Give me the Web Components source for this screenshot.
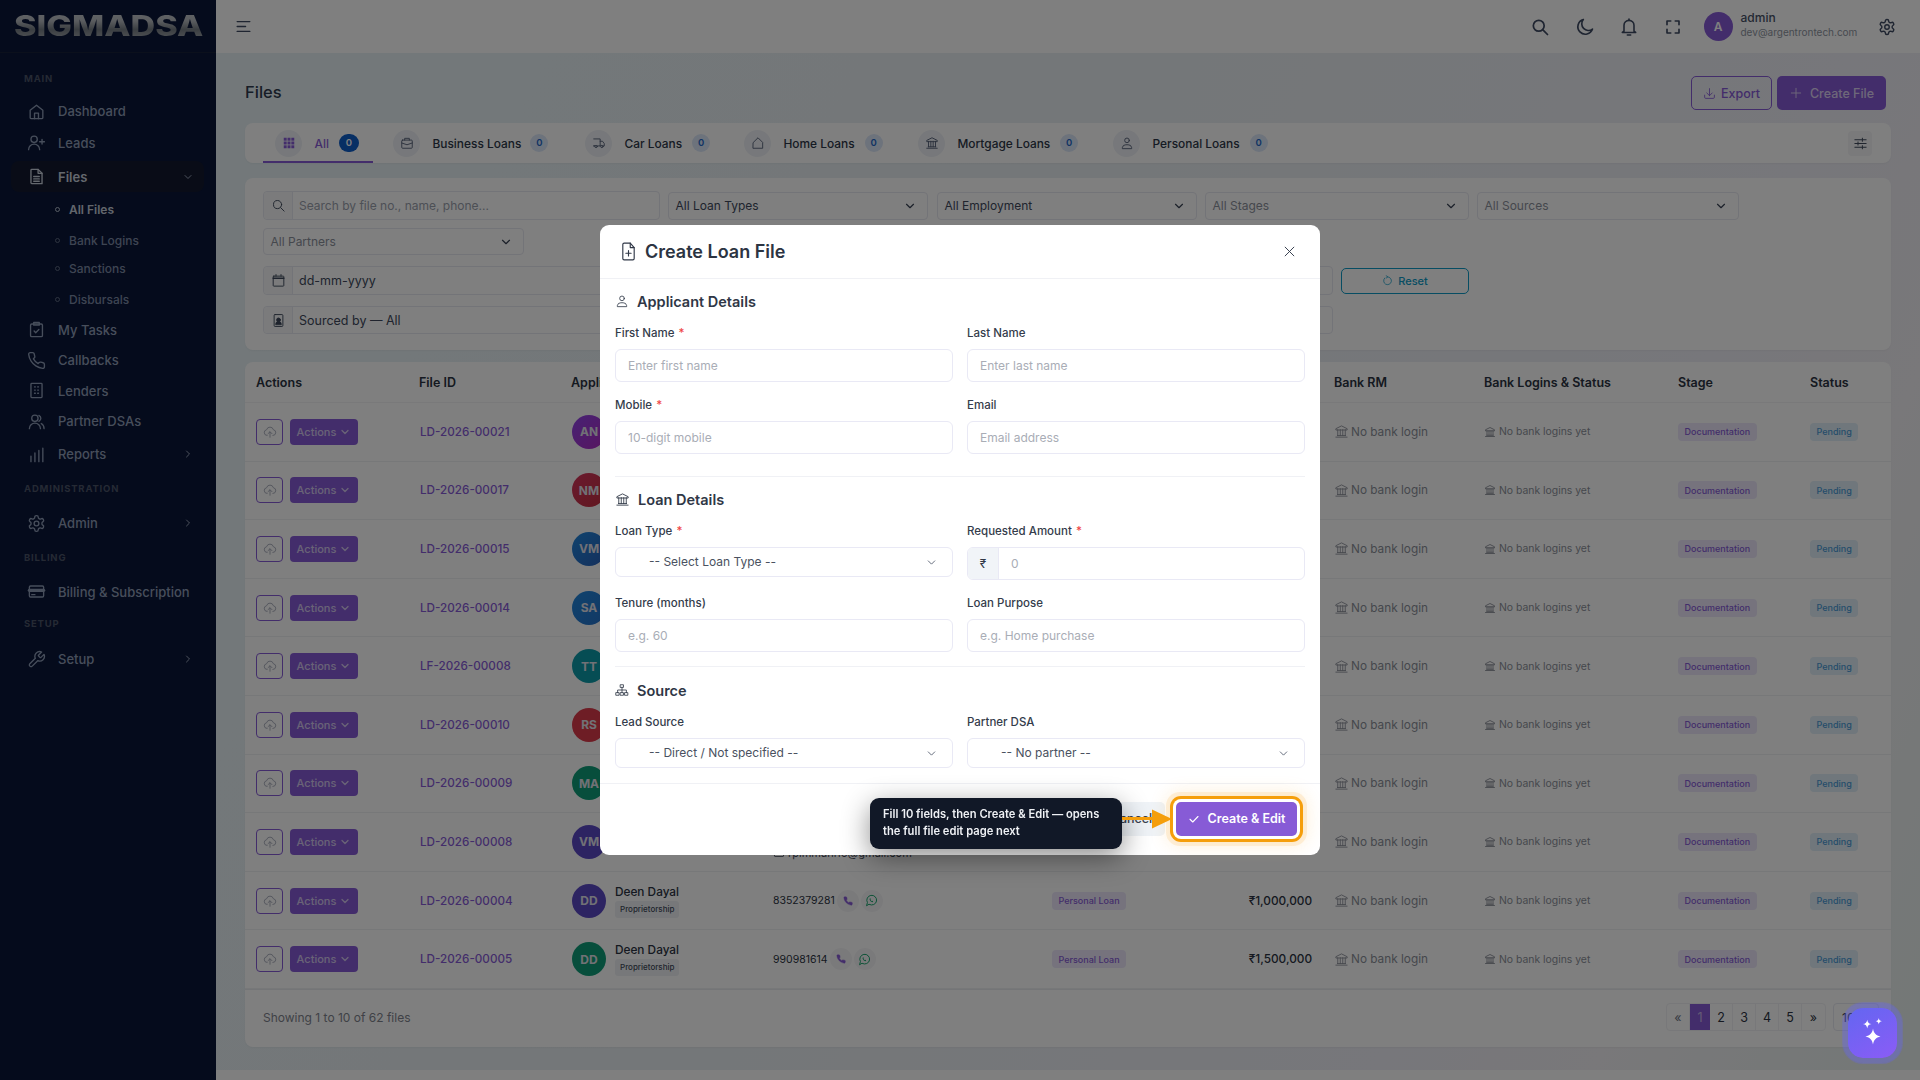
<!DOCTYPE html>
<html lang="en">
<head>
<meta charset="utf-8">
<title>Files</title>
<style>
html,body{margin:0;padding:0;width:1920px;height:1080px;overflow:hidden;background:#fff;font-family:Inter,"Liberation Sans",sans-serif}
</style>
</head>
<body>
<app-shell></app-shell>
<script>
const P={
home:'<path d="M4 10.5 12 4l8 6.5V20a1 1 0 0 1-1 1H5a1 1 0 0 1-1-1z"/><path d="M9.5 21v-7h5v7"/>',
userplus:'<circle cx="9" cy="8" r="4"/><path d="M2 21a7 7 0 0 1 14 0"/><path d="M19 8v6M16 11h6"/>',
file:'<path d="M6 3h8l5 5v13H6a1 1 0 0 1-1-1V4a1 1 0 0 1 1-1z"/><path d="M14 3v5h5"/><path d="M8.500 12h7M8.500 15h7M8.500 18h7"/>',
tasks:'<rect x="4.500" y="5" width="15" height="16" rx="1.500"/><path d="M8.500 3h7v3.500h-7z"/><path d="m9 14 2 2 4-4"/>',
phone:'<path d="M22 16.920v3a2 2 0 0 1-2.180 2 19.790 19.790 0 0 1-8.630-3.070 19.500 19.500 0 0 1-6-6 19.790 19.790 0 0 1-3.070-8.670A2 2 0 0 1 4.110 2h3a2 2 0 0 1 2 1.720c.13.960.36 1.900.7 2.810a2 2 0 0 1-.45 2.110L8.090 9.910a16 16 0 0 0 6 6l1.270-1.270a2 2 0 0 1 2.110-.45c.91.340 1.850.57 2.810.7A2 2 0 0 1 22 16.920z"/>',
building:'<rect x="5" y="3" width="14" height="18" rx="1"/><path d="M9.500 7.500h1M13.500 7.500h1M9.500 11.500h1M13.500 11.500h1M9.500 15.500h1M13.500 15.500h1"/>',
users:'<circle cx="10" cy="8" r="4"/><path d="M3 21a7 7 0 0 1 14 0"/><path d="M15 4.300a4 4 0 0 1 0 7.400M18 14.500a7 7 0 0 1 3.500 6.500"/>',
bars:'<path d="M5 21v-7M10 21V10M15 21V7M20 21V4"/>',
gear:'<path d="M12.220 2h-.44a2 2 0 0 0-2 2v.18a2 2 0 0 1-1 1.730l-.43.25a2 2 0 0 1-2 0l-.15-.08a2 2 0 0 0-2.730.73l-.22.38a2 2 0 0 0 .73 2.730l.15.1a2 2 0 0 1 1 1.720v.51a2 2 0 0 1-1 1.740l-.15.09a2 2 0 0 0-.73 2.730l.22.38a2 2 0 0 0 2.730.73l.15-.08a2 2 0 0 1 2 0l.43.25a2 2 0 0 1 1 1.730V20a2 2 0 0 0 2 2h.44a2 2 0 0 0 2-2v-.18a2 2 0 0 1 1-1.730l.43-.25a2 2 0 0 1 2 0l.15.08a2 2 0 0 0 2.730-.73l.22-.39a2 2 0 0 0-.73-2.730l-.15-.08a2 2 0 0 1-1-1.740v-.5a2 2 0 0 1 1-1.740l.15-.09a2 2 0 0 0 .73-2.730l-.22-.38a2 2 0 0 0-2.730-.73l-.15.08a2 2 0 0 1-2 0l-.43-.25a2 2 0 0 1-1-1.730V4a2 2 0 0 0-2-2z"/><circle cx="12" cy="12" r="3"/>',
card:'<rect x="3" y="5" width="18" height="14" rx="1.500"/><path d="M3 10.500h18" stroke-width="4"/><path d="M6 16h4"/>',
wrench:'<path d="M14.700 6.300a1 1 0 0 0 0 1.400l1.600 1.600a1 1 0 0 0 1.400 0l3.770-3.770a6 6 0 0 1-7.940 7.940l-6.910 6.910a2.120 2.120 0 0 1-3-3l6.910-6.910a6 6 0 0 1 7.940-7.940l-3.760 3.760z"/>',
chevd:'<path d="m6 9 6 6 6-6"/>',
chevr:'<path d="m9 6 6 6-6 6"/>',
menu:'<path d="M3 5h18M3 12h12M3 19h18"/>',
search:'<circle cx="10.500" cy="10.500" r="6.500"/><path d="m15.500 15.500 5.500 5.500"/>',
moon:'<path d="M10 3a9 9 0 1 0 11 11.500A8 8 0 0 1 10 3z"/>',
bell:'<path d="M6 17V10a6 6 0 0 1 12 0v7l2 1.500H4z"/><path d="M10 21.500h4M12 4V2.500"/>',
expand:'<path d="M4 9V4h5M15 4h5v5M20 15v5h-5M9 20H4v-5"/>',
download:'<path d="M3 15v4a2 2 0 0 0 2 2h14a2 2 0 0 0 2-2v-4"/><path d="m7 11 5 5 5-5M12 16V3"/>',
plus:'<path d="M12 4v16M4 12h16"/>',
sliders:'<path d="M3 6h18M3 12h18M3 18h18"/><path d="M15 3.500v5M8 9.500v5M15 15.500v5"/>',
grid:'<g fill="currentColor" stroke="none"><rect x="3" y="3" width="5" height="5"/><rect x="9.500" y="3" width="5" height="5"/><rect x="16" y="3" width="5" height="5"/><rect x="3" y="9.500" width="5" height="5"/><rect x="9.500" y="9.500" width="5" height="5"/><rect x="16" y="9.500" width="5" height="5"/><rect x="3" y="16" width="5" height="5"/><rect x="9.500" y="16" width="5" height="5"/><rect x="16" y="16" width="5" height="5"/></g>',
brief:'<rect x="3" y="7" width="18" height="14" rx="1.500"/><path d="M8 7V4h8v3M3 12l9 3 9-3"/>',
truck:'<path d="M3 5h11v12H9M5 17H3z"/><path d="M14 9h4l3 4v4h-2M15 17h-1"/><circle cx="7" cy="18" r="2"/><circle cx="17" cy="18" r="2"/>',
house:'<path d="M4 11 12 3l8 8v10H4z"/>',
bank:'<path d="M3 21h18M3 9V7.500L12 3l9 4.500V9zM5.500 18.500h13M6 9v9.500M10 9v9.500M14 9v9.500M18 9v9.500"/>',
user:'<circle cx="12" cy="7.500" r="4"/><path d="M4 21v-1a6 6 0 0 1 6-5h4a6 6 0 0 1 6 5v1z"/>',
cloud:'<path d="M7 18a5 5 0 0 1-.8-9.900 6 6 0 0 1 11.600 0A5 5 0 0 1 17 18"/><path d="M12 21v-9M8.500 15l3.500-3.500 3.500 3.500"/>',
calendar:'<rect x="3.500" y="5" width="17" height="16" rx="1"/><path d="M3.500 8.500h17" stroke-width="2.500"/><path d="M8 2.500V5M16 2.500V5"/>',
contact:'<rect x="5" y="2.500" width="14" height="19" rx="1.500"/><circle cx="12" cy="11" r="3" fill="currentColor"/><path d="M7.500 18a4.500 4.500 0 0 1 9 0z" fill="currentColor"/>',
reset:'<path d="M6 6.500A8.500 8.500 0 1 0 12 4"/><path d="M9 1.500 12.500 4 9 7"/>',
fileplus:'<path d="M7 2.500h7l4.500 5V20a1.500 1.500 0 0 1-1.500 1.500H7A1.500 1.500 0 0 1 5.500 20V4A1.500 1.500 0 0 1 7 2.500z"/><path d="M14 2.500v5h4.500M12 11v6M9 14h6"/>',
tree:'<rect x="9.500" y="3" width="5" height="4.500"/><rect x="2" y="16.500" width="5" height="4.500"/><rect x="9.500" y="16.500" width="5" height="4.500"/><rect x="17" y="16.500" width="5" height="4.500"/><path d="M12 7.500v9M4.500 16.500V12h15v4.500"/>',
close:'<path d="M5 5l14 14M19 5 5 19"/>',
check:'<path d="m4 12.500 5.500 5.500L20 7"/>',
mail:'<rect x="3" y="5" width="18" height="14" rx="1"/><path d="m3 7 9 6 9-6"/>',
wa:'<path d="M3 21l1.500-5.200a9 9 0 1 1 3.500 3.500z"/><path d="M9 8.500c-.8.600-.8 2 .5 3.800s3 2.900 4.200 2.700c1-.2 1.300-1 1.300-1.700l-1.700-.9-.8.900c-1-.4-2-1.400-2.500-2.500l.8-.9-.8-1.900z" fill="currentColor" stroke="none"/>'
};
const ic=(n,s,w=1.8,extra='')=>`<svg ${extra} width="${s}" height="${s}" viewBox="0 0 24 24" fill="none" stroke="currentColor" stroke-width="${w}" stroke-linecap="round" stroke-linejoin="round" style="flex:none;display:block">${P[n]}</svg>`;
const tpl=(html)=>{const t=document.createElement('template');t.innerHTML=html;return t};
function el(name,css,html){
  const t=typeof html==='string'?tpl(`<style>${css}</style>${html}`):null;
  customElements.define(name,class extends HTMLElement{
    constructor(){super();const s=this.attachShadow({mode:'open'});
      if(t)s.appendChild(t.content.cloneNode(true));
      else s.innerHTML=`<style>${css}</style>${html(this)}`;}
  });
}
const A=(e,k,d='')=>e.getAttribute(k)??d;

/* ---------- sidebar ---------- */
el('nav-section',`:host{display:flex;align-items:center;height:var(--h,30px);padding-left:24px;font:700 9.5px Inter,sans-serif;letter-spacing:.8px;color:#4a5469;text-transform:uppercase}`,`<slot></slot>`);
el('nav-item',`
:host{display:flex;align-items:center;height:var(--h,31px);padding:0 12px 0 11px;font:500 13px Inter,sans-serif;color:#8f9db7}
.row{flex:1;height:100%;display:flex;align-items:center;position:relative;padding-left:15.500px;border-radius:8px;box-sizing:border-box}
:host([active]){align-items:flex-end;color:#c9d0dc}
:host([active]) .row{background:#13192f;font-weight:600;height:31px}
.lbl{margin-left:12.500px;white-space:nowrap}
.chev{position:absolute;right:10px;top:50%;margin-top:-6px;color:#98a3b8}
`,e=>`<div class="row">${ic(A(e,'icon'),19,1.7)}<span class="lbl"><slot></slot></span>${e.hasAttribute('chev')?`<span class="chev">${ic(A(e,'chev'),12,2)}</span>`:''}</div>`);
el('nav-sub',`
:host{display:flex;align-items:center;height:var(--h,30px);padding-left:55px;font:500 12px Inter,sans-serif;letter-spacing:0;color:#7d8aa5}
i{display:block;width:3px;height:3px;border:1px solid #5c6880;border-radius:50%;margin-right:9px}
:host([active]){font-weight:600;color:#c4ccd9}
:host([active]) i{border-color:#b0bac9}
`,`<i></i><slot></slot>`);
el('brand-logo',`
:host{display:flex;align-items:center;height:53px;box-sizing:border-box;border-bottom:1px solid #172038;padding-left:14px;overflow:hidden}
span{display:block;font:800 28px Inter,sans-serif;letter-spacing:0;transform:scaleX(1.22);transform-origin:left center;white-space:nowrap;
background:linear-gradient(180deg,#c8ccd0 0%,#b6babf 35%,#767d84 60%,#b2b6bb 100%);-webkit-background-clip:text;background-clip:text;color:transparent}
`,`<span>SIGMADSA</span>`);
el('side-nav',`
:host{display:block;width:216px;flex:none;background:#0a1638;height:1080px;overflow:hidden}
.list{display:block;padding-top:8px}
`,`<brand-logo></brand-logo><div class="list">
<nav-section style="--h:34px">Main</nav-section>
<nav-item icon="home" style="--h:32px">Dashboard</nav-item>
<nav-item icon="userplus" style="--h:31px">Leads</nav-item>
<nav-item icon="file" chev="chevd" active style="--h:34px">Files</nav-item>
<nav-sub active style="--h:35px">All Files</nav-sub>
<nav-sub style="--h:26px">Bank Logins</nav-sub>
<nav-sub style="--h:31px">Sanctions</nav-sub>
<nav-sub style="--h:30px">Disbursals</nav-sub>
<nav-item icon="tasks" style="--h:31px">My Tasks</nav-item>
<nav-item icon="phone" style="--h:30px">Callbacks</nav-item>
<nav-item icon="building" style="--h:31px">Lenders</nav-item>
<nav-item icon="users" style="--h:30px">Partner DSAs</nav-item>
<nav-item icon="bars" chev="chevr" style="--h:36px">Reports</nav-item>
<nav-section style="--h:33px">Administration</nav-section>
<nav-item icon="gear" chev="chevr" style="--h:36px">Admin</nav-item>
<nav-section style="--h:32px">Billing</nav-section>
<nav-item icon="card" style="--h:37px">Billing &amp; Subscription</nav-item>
<nav-section style="--h:27px">Setup</nav-section>
<nav-item icon="wrench" chev="chevr" style="--h:44px">Setup</nav-item>
</div>`);

/* ---------- top bar ---------- */
el('top-bar',`
:host{display:flex;align-items:center;height:53px;background:#fff;padding:0 24px 0 19px;box-sizing:border-box;color:#3e4a63}
.sp{flex:1}
.ic{display:flex;align-items:center;justify-content:center;width:44.300px}
.av{width:29px;height:29px;border-radius:50%;background:#875bd6;color:#fff;font:600 12px Inter,sans-serif;display:flex;align-items:center;justify-content:center;margin-left:8px}
.who{margin:-4px 0 0 8px;width:137.500px;font:11px/1 Inter,sans-serif;color:#8e94a0}
.who b{display:block;font:500 12px/14px Inter,sans-serif;color:#475167}
.who span{display:block;line-height:14px;font-size:10px;white-space:nowrap}
`,`${ic('menu',17,1.8)}<div class="sp"></div>
<div class="ic">${ic('search',20,2.1)}</div><div class="ic">${ic('moon',20,2)}</div><div class="ic">${ic('bell',20,1.9)}</div><div class="ic">${ic('expand',18,2.2)}</div>
<div class="av">A</div><div class="who"><b>admin</b><span>dev@argentrontech.com</span></div>${ic('gear',18,1.9)}`);

/* ---------- generic ---------- */
el('ui-btn',`
:host{display:inline-flex;align-items:center;justify-content:center;box-sizing:border-box;height:var(--h,34px);width:var(--w,auto);border-radius:5px;font:500 12.500px Inter,sans-serif;gap:5px;white-space:nowrap}
:host([kind=primary]){background:#875bd6;color:#dcd0f3;}
:host([kind=outline]){border:1.500px solid #875bd6;color:#875bd6;}
:host([kind=reset]){border:1.500px solid #0e9bc6;color:#0e9bc6;font-size:11px}
`,e=>`${e.hasAttribute('icon')?ic(A(e,'icon'),+A(e,'size',13),1.6):''}<slot></slot>`);
el('page-head',`
:host{display:flex;align-items:center;height:34px;padding-right:5px}
h1{margin:0 0 2px;flex:1;font:500 16.500px Inter,sans-serif;color:#2e3a4e}
.btns{display:flex;gap:5px}
`,`<h1>Files</h1><div class="btns"><ui-btn kind="outline" icon="download" style="--w:81px">Export</ui-btn><ui-btn kind="primary" icon="plus" size="14" style="--w:109px;gap:7px">Create File</ui-btn></div>`);

el('tab-item',`
:host{display:flex;align-items:center;height:40px;box-sizing:border-box;position:relative;font:500 11.900px Inter,sans-serif;color:#2d3748;flex:none;width:var(--w)}
.c{width:27px;height:27px;border-radius:50%;background:#eef1f6;display:flex;align-items:center;justify-content:center;color:#566178;margin-left:var(--ml,0)}
.t{margin-left:12.500px;white-space:nowrap}
.b{margin-left:var(--bm,10px);min-width:18px;height:18px;padding:0 2px;box-sizing:border-box;border-radius:10px;background:#dbe6f8;color:#2267c9;font:600 9.500px/18px Inter,sans-serif;text-align:center}
:host([active]){color:#875bd6}
:host([active]) .c{color:#875bd6}
:host([active]) .b{background:#0e5ec9;color:#fff;width:20px}
:host([active])::after{content:"";position:absolute;left:0;right:0;bottom:0;height:2px;background:#875bd6}
`,e=>`<div class="c">${ic(A(e,'icon'),14,1.6)}</div><span class="t"><slot></slot></span><span class="b">0</span>`);
el('tab-bar',`
:host{display:flex;align-items:center;height:40px;background:#fff;border-radius:8px;margin-top:13px;padding-left:18px;position:relative;box-shadow:0 1px 2px rgba(0,0,0,.04)}
.s{position:absolute;right:19px;top:8px;width:24px;height:25px;border-radius:4px;background:#f4f5f7;color:#404a5d;display:flex;align-items:center;justify-content:center}
`,`<tab-item active icon="grid" style="--w:110px;--ml:12px;--bm:10px">All</tab-item>
<tab-item icon="brief" style="--w:200px;--ml:20px;--bm:9px">Business Loans</tab-item>
<tab-item icon="truck" style="--w:160px;--ml:12px;--bm:10px">Car Loans</tab-item>
<tab-item icon="house" style="--w:175px;--ml:11px;--bm:10px">Home Loans</tab-item>
<tab-item icon="bank" style="--w:195px;--ml:10px;--bm:10px">Mortgage Loans</tab-item>
<tab-item icon="user" style="--w:170px;--ml:10px;--bm:10px">Personal Loans</tab-item>
<div class="s">${ic('sliders',15,1.6)}</div>`);

el('filter-select',`
:host{display:flex;align-items:center;box-sizing:border-box;width:var(--w);height:var(--h,28px);border:1px solid #e6e8f0;border-radius:4px;background:#fff;padding:0 10px 0 6.500px;font:400 12px Inter,sans-serif;color:var(--c,#40495c)}
span{flex:1;white-space:nowrap}
i{color:#384254;display:block}
`,e=>`<span><slot></slot></span><i>${ic('chevd',14,2)}</i>`);
el('filter-group',`
:host{display:flex;align-items:center;box-sizing:border-box;width:var(--w);height:var(--h,29px);border:1px solid #e6e8f0;border-radius:4px;background:#fff;font:400 12.500px Inter,sans-serif;color:var(--c,#40495c)}
.a{width:28px;height:100%;border-right:1px solid #e6e8f0;display:flex;align-items:center;justify-content:center;color:#3d475a;background:#f6f7f9;border-radius:4px 0 0 4px;flex:none}
span{padding-left:6px;white-space:nowrap}
`,e=>`<div class="a">${ic(A(e,'icon'),15,1.5)}</div><span><slot></slot></span>`);
el('filter-panel',`
:host{display:block;background:#fff;border-radius:8px;margin-top:15px;padding:13px 18px 0;height:172px;box-sizing:border-box;box-shadow:0 1px 2px rgba(0,0,0,.04)}
.r{display:flex;gap:8px;align-items:center}
`,`<div class="r"><filter-group icon="search" style="--w:397px;--c:#9aa0ac;--h:29px"><span style="font-size:12px">Search by file no., name, phone...</span></filter-group>
<filter-select style="--w:260px">All Loan Types</filter-select><filter-select style="--w:260px;margin-left:1px">All Employment</filter-select>
<filter-select style="--w:264px;--c:#8b909b">All Stages</filter-select><filter-select style="--w:262px;--c:#8b909b">All Sources</filter-select></div>
<div class="r" style="margin-top:8px"><filter-select style="--w:261px;--h:27px;--c:#8b909b">All Partners</filter-select></div>
<div class="r" style="margin-top:11px"><filter-group icon="calendar" style="--w:1070px">dd-mm-yyyy</filter-group><ui-btn kind="reset" icon="reset" size="11" style="--w:128px;--h:26px">Reset</ui-btn></div>
<div class="r" style="margin-top:11px"><filter-group icon="contact" style="--w:1070px;--h:28px">Sourced by — All</filter-group></div>`);

/* ---------- table ---------- */
const COLS='163px 152px 202px 279px 159px 123px 150px 194px 132px 1fr';
el('row-head',`
:host{display:grid;grid-template-columns:${COLS};height:40px;align-items:center;border-bottom:1px solid #f2f3f5;font:600 12.500px Inter,sans-serif;color:#2b3342}
div{padding-left:11px;white-space:nowrap}
`,`<div>Actions</div><div>File ID</div><div>Applicant</div><div>Contact</div><div>Loan Type</div><div></div><div>Bank RM</div><div>Bank Logins &amp; Status</div><div>Stage</div><div>Status</div>`);
el('status-chip',`
:host{display:inline-flex;align-items:center;height:18px;padding:0 6.500px;border-radius:4px;font:500 9px Inter,sans-serif;white-space:nowrap;background:var(--b,#ece7fa);color:var(--f,#875bd6)}
`,`<slot></slot>`);
el('file-row',`
:host{display:grid;grid-template-columns:${COLS};height:58.600px;box-sizing:border-box;align-items:center;border-bottom:1px solid #eff0f3;font:400 12px Inter,sans-serif;color:#2b3342}
.c{padding-left:11px;display:flex;align-items:center;white-space:nowrap;min-width:0;height:100%;box-sizing:border-box}
.up{width:27px;height:26px;box-sizing:border-box;border:1.200px solid #875bd6;border-radius:4px;display:flex;align-items:center;justify-content:center;color:#9a9fb0;margin-right:7px}
.ac{width:68px;height:26px;border-radius:4px;background:#875bd6;color:#d3c7ee;font:500 11px Inter,sans-serif;display:flex;align-items:center;justify-content:center;gap:3px}
.id{font:500 11.700px Inter,sans-serif;color:#875bd6;margin-left:1px}
.av{width:34px;height:34px;border-radius:50%;color:#e2e3ec;font:700 12px Inter,sans-serif;display:flex;align-items:center;justify-content:center;flex:none;margin-left:1px}
.nm{margin-left:9px;font:500 11.800px/16px Inter,sans-serif;color:#2b3342}
.pr{display:block;margin-top:1px;width:max-content;font:500 8px/17px Inter,sans-serif;padding:0 5px;background:#eff1f5;border-radius:3px;color:#414a5a}
.ph{font-size:10.500px;color:#2b3342}
.r1,.r2{width:22px;height:22px;border-radius:50%;background:#f5f5f7;display:flex;align-items:center;justify-content:center;flex:none}
.r1{color:#875bd6;margin-left:2px}.r2{color:#16a36b;margin-left:2px}
.r1 svg{fill:currentColor}
.amt{justify-content:flex-end;padding:0 11px 0 0;font:500 11.800px Inter,sans-serif;color:#2b3342}
.rm{color:#8b8f99;font-size:11.800px;gap:2px}
.bl{color:#8b8f99;font-size:10.400px;gap:3px}
.ml{display:flex;align-items:center;gap:3px;margin-top:22px;font-size:11px;color:#3b4352}
`,e=>{const nm=A(e,'name');return `
<div class="c"><div class="up">${ic('cloud',14,1.4)}</div><div class="ac">Actions ${ic('chevd',12,2.6)}</div></div>
<div class="c"><span class="id">${A(e,'fid')}</span></div>
<div class="c"><div class="av" style="background:${A(e,'col')}">${A(e,'ini')}</div>${nm?`<div class="nm">${nm}<span class="pr">Proprietorship</span></div>`:''}</div>
<div class="c">${A(e,'tel')?`<span class="ph">${A(e,'tel')}</span><span class="r1">${ic('phone',10,1)}</span><span class="r2">${ic('wa',13,1.8)}</span>`:''}${A(e,'mail')?`<span class="ml">${ic('mail',12,1.6)}${A(e,'mail')}</span>`:''}</div>
<div class="c">${A(e,'type')?`<status-chip>${A(e,'type')}</status-chip>`:''}</div>
<div class="c amt">${A(e,'amt')}</div>
<div class="c rm">${ic('bank',15,1.4)}No bank login</div>
<div class="c bl">${ic('bank',12,1.8)}No bank logins yet</div>
<div class="c"><status-chip>Documentation</status-chip></div>
<div class="c"><status-chip style="--b:#e0eef8;--f:#4a9bd6">Pending</status-chip></div>`});
el('page-nav',`
:host{display:flex;height:28px;border:1px solid #f0f1f4;border-radius:4px;box-sizing:border-box;font:400 12.500px Inter,sans-serif;color:#2b3342}
b{font-weight:400;width:23px;display:flex;align-items:center;justify-content:center;border-right:1px solid #f0f1f4;box-sizing:border-box}
b:last-child{border:0}
b.on{width:20px;background:#875bd6;color:#c9b8ea;border:0}
b.g{color:#6e7585}
`,`<b class="g">«</b><b class="on">1</b><b>2</b><b>3</b><b>4</b><b>5</b><b>»</b>`);
el('file-table',`
:host{display:block;background:#fff;border-radius:8px;margin-top:12px;height:685px;box-sizing:border-box;box-shadow:0 1px 2px rgba(0,0,0,.04);overflow:hidden}
.f{display:flex;align-items:center;height:57px;padding:0 0 1px 18px;border-top:1px solid #e9eaee;box-sizing:border-box;font:400 12px Inter,sans-serif;color:#7e838d}
.f span{flex:1}
.sel{width:46px;height:28px;margin:0 12px 0 7px;border:1px solid #e6e8f0;border-radius:4px;box-sizing:border-box;padding:6px 8px;font-size:12px;color:#2b3342}
`,()=>{const D=[['LD-2026-00021','AN','linear-gradient(135deg,#8e44e8,#b02cc0)'],['LD-2026-00017','NM','linear-gradient(135deg,#d5345c,#c23040)'],['LD-2026-00015','VM','linear-gradient(135deg,#1f86dc,#2a5fb8)'],['LD-2026-00014','SA','linear-gradient(135deg,#1f86dc,#2570c8)'],['LF-2026-00008','TT','#0d9aa8'],['LD-2026-00010','RS','#dc3a4a'],['LD-2026-00009','MA','#0f9d78'],['LD-2026-00008','VM','#5b48c4','rpimmahi16@gmail.com']];
return `<row-head></row-head>${D.map(d=>`<file-row fid="${d[0]}" ini="${d[1]}" col="${d[2]}"${d[3]?` mail="${d[3]}"`:''}></file-row>`).join('')}
<file-row fid="LD-2026-00004" ini="DD" col="#5b48c4" name="Deen Dayal" tel="8352379281" type="Personal Loan" amt="₹1,000,000"></file-row>
<file-row fid="LD-2026-00005" ini="DD" col="#0f9d78" name="Deen Dayal" tel="990981614" type="Personal Loan" amt="₹1,500,000"></file-row>
<div class="f"><span>Showing 1 to 10 of 62 files</span><page-nav></page-nav><div class="sel">10</div></div>`});
el('main-pane',`
:host{display:block;flex:1;min-width:0;height:1027px;padding:23px 29px 0 29px;box-sizing:border-box;background:linear-gradient(115deg,#e6f1f5 0%,#e9eef2 45%,#eeeef6 75%,#f2f0f4 85%,#e8f0ee 100%)}
`,`<page-head></page-head><tab-bar></tab-bar><filter-panel></filter-panel><file-table></file-table>`);
el('page-foot',`:host{display:block;height:10px;background:#fff}`,``);
el('right-col',`:host{display:flex;flex-direction:column;flex:1;min-width:0}`,`<top-bar></top-bar><main-pane></main-pane><page-foot></page-foot>`);

/* ---------- modal ---------- */
el('sec-title',`
:host{display:flex;align-items:center;gap:8px;font:600 14.500px Inter,sans-serif;color:#2f3746;height:20px}
`,e=>`${ic(A(e,'icon'),+A(e,'size',14),1.4)}<slot></slot>`);
el('form-field',`
:host{display:block;font:400 12px Inter,sans-serif}
label{display:block;font:500 11.500px/14px Inter,sans-serif;color:#343c4b;margin-bottom:9px;white-space:nowrap}
label em{color:#ef4444;font-style:normal;margin-left:1px}
.b{display:flex;box-sizing:border-box;height:var(--h,33px);border:1px solid #e9e9f5;border-radius:6px;overflow:hidden;background:#fff;align-items:center}
input{border:0;outline:0;flex:1;min-width:0;height:100%;padding:0 12px;font:400 12px Inter,sans-serif;background:transparent;color:#333}
input::placeholder{color:#a9adb6;opacity:1}
.pre{width:30px;height:100%;background:#f1f4f8;display:flex;align-items:center;justify-content:center;border-right:1px solid #e9e9f5;font-size:12px;color:#2f3746;flex:none}
.s{flex:1;padding:0 0 1px 33px;font:400 12px Inter,sans-serif;color:#4a5160;white-space:nowrap}
.ch{margin-right:14px;color:#5a6273}
`,e=>{const o=A(e,'select');const pre=A(e,'pre');return `<label>${A(e,'label')}${e.hasAttribute('req')?' <em>*</em>':''}</label>
<div class="b">${o?`<span class="s">${o}</span><span class="ch">${ic('chevd',13,1.7)}</span>`:`${pre?`<span class="pre">${pre}</span>`:''}<input type="text" placeholder="${A(e,'ph')}" aria-label="${A(e,'label')}">`}</div>`});
el('form-grid',`
:host{display:grid;grid-template-columns:338px 338px;column-gap:14px;row-gap:16px;margin-top:var(--mt,15px)}
`,`<slot></slot>`);
el('guide-tip',`
:host{display:block;position:absolute;left:270px;top:14px;width:252px;height:51px;box-sizing:border-box;background:#111827;border-radius:9px;padding:8px 13px;font:600 11.200px/17px Inter,sans-serif;color:#eef0f4;box-shadow:0 8px 28px rgba(0,0,0,.45);z-index:3}
.ar{position:absolute;left:252px;top:11px;width:50px;height:20px}
`,`<slot></slot><svg class="ar" viewBox="0 0 50 20"><path d="M0 9.500h32" stroke="#f59e0b" stroke-width="3"/><path d="M30 .5 50 10 30 19.500z" fill="#f59e0b"/></svg>`);
el('loan-modal',`
:host{display:block;position:fixed;left:600px;top:225px;width:720px;height:630px;background:#fff;border-radius:9px;z-index:20;font-family:Inter,sans-serif}
.h{display:flex;align-items:center;height:54px;box-sizing:border-box;border-bottom:1px solid #f0f1f5;padding:0 23px 0 18px;color:#2f3746}
.h h2{flex:1;margin:0 0 0 6px;font:600 18px Inter,sans-serif;color:#2c3442}
.body{padding:12px 15px 0}
hr{border:0;border-top:1px solid #f0f1f5;margin:0}
.foot{position:absolute;left:0;right:0;bottom:0;height:72px;border-top:1px solid #f0f1f5;box-sizing:border-box;display:flex;align-items:center;justify-content:flex-end;padding:0 23px 0 0;gap:11px}
.cancel{width:90px;height:34px;border-radius:5px;background:#eff3f7;font:500 12.500px/34px Inter,sans-serif;color:#39414f;text-align:center;margin-top:-2px;padding-left:23px;box-sizing:border-box}
.go{width:121px;height:34px;border-radius:5px;background:#875bd6;color:#fff;font:600 12.500px Inter,sans-serif;display:flex;align-items:center;justify-content:center;gap:8px;box-shadow:0 0 0 3px #fff,0 0 0 6px #f59e0b,0 0 0 10px rgba(245,158,11,.12),0 0 18px 10px rgba(245,158,11,.14);margin-top:-2px}
`,`<div class="h">${ic('fileplus',21,1.3)}<h2>Create Loan File</h2>${ic('close',15,1.5)}</div>
<div class="body">
<sec-title icon="user">Applicant Details</sec-title>
<form-grid><form-field label="First Name" req ph="Enter first name"></form-field><form-field label="Last Name" ph="Enter last name"></form-field><form-field label="Mobile" req ph="10-digit mobile"></form-field><form-field label="Email" ph="Email address"></form-field></form-grid>
<hr style="margin-top:22px;margin-bottom:12px">
<sec-title icon="bank" size="15">Loan Details</sec-title>
<form-grid><form-field label="Loan Type" req select="-- Select Loan Type --" style="--h:30px"></form-field><form-field label="Requested Amount" req pre="₹" ph="0"></form-field><form-field label="Tenure (months)" ph="e.g. 60"></form-field><form-field label="Loan Purpose" ph="e.g. Home purchase"></form-field></form-grid>
<hr style="margin-top:14px;margin-bottom:13px">
<sec-title icon="tree" size="14">Source</sec-title>
<form-grid><form-field label="Lead Source" select="-- Direct / Not specified --" style="--h:30px"></form-field><form-field label="Partner DSA" select="-- No partner --" style="--h:30px"></form-field></form-grid>
</div>
<div class="foot"><guide-tip>Fill 10 fields, then Create &amp; Edit — opens the full file edit page next</guide-tip><div class="cancel">Cancel</div><div class="go">${ic('check',12,2.2)}Create &amp; Edit</div></div>`);
el('modal-scrim',`:host{display:block;position:fixed;inset:0;background:rgba(0,0,0,.5);z-index:10}`,``);
el('ai-fab',`
:host{display:flex;position:fixed;left:1848px;top:1008px;width:49px;height:50px;border-radius:15px;background:linear-gradient(150deg,#6366f1,#8b5cf6);box-shadow:0 0 0 5px rgba(99,102,241,.16),0 0 0 6px rgba(99,102,241,.28);z-index:30;align-items:center;justify-content:center}
`,`<svg width="28" height="30" viewBox="0 0 24 26" fill="#fff"><path d="M12 9c.6 4 2.500 6 6.500 7-4 1-5.900 3-6.500 7-.6-4-2.500-6-6.500-7 4-1 5.900-3 6.500-7z"/><path d="M7 1.500c.3 2.300 1.400 3.400 3.700 3.800C8.400 5.700 7.300 6.800 7 9.100 6.700 6.800 5.600 5.700 3.300 5.300 5.600 4.900 6.700 3.800 7 1.500z"/><path d="M17 0c.2 1.700 1 2.500 2.700 2.800C18 3.100 17.200 3.900 17 5.600c-.2-1.700-1-2.500-2.700-2.800C16 2.500 16.800 1.700 17 0z"/></svg>`);
el('app-shell',`:host{display:flex;width:1920px;height:1080px;overflow:hidden}`,`<side-nav></side-nav><right-col></right-col><modal-scrim></modal-scrim><loan-modal></loan-modal><ai-fab></ai-fab>`);
</script>
</body>
</html>
